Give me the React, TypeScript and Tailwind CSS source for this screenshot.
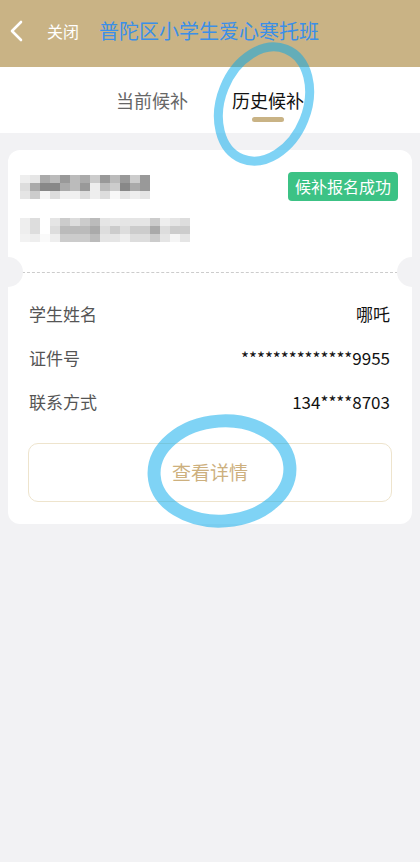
import React from 'react';

const FONT = { fontFamily: '"Noto Sans CJK SC", "Noto Sans", sans-serif' };

// 打码区块的灰度数据
const blurA = [
  ['#eeeeee', '#e6e6e6', '#aaaaaa', '#bbbbbb', '#999999', '#bbbbbb', '#aaaaaa', '#cccccc', '#999999', '#bbbbbb', '#999999', '#cccccc', '#999999'],
  ['#dddddd', '#aaaaaa', '#888888', '#888888', '#aaaaaa', '#bbbbbb', '#999999', '#eeeeee', '#bbbbbb', '#cccccc', '#888888', '#aaaaaa', '#999999'],
  ['#e5e5e5', '#cccccc', '#f5f5f5', '#dddddd', '#f0f0f0', '#f0f0f0', '#dddddd', '#eeeeee', '#dddddd', '#f8f8f8', '#e5e5e5', '#eeeeee', '#e5e5e5'],
];

const blurB = [
  ['#eeeeee', '#dddddd', '#ffffff', '#e5e5e5', '#cccccc', '#dddddd', '#cccccc', '#bbbbbb', '#e5e5e5', '#e8e8e8', '#e5e5e5', '#e5e5e5', '#e5e5e5', '#cccccc', '#eeeeee', '#e5e5e5', '#dddddd'],
  ['#eeeeee', '#dddddd', '#ffffff', '#dddddd', '#bbbbbb', '#bbbbbb', '#bbbbbb', '#aaaaaa', '#dddddd', '#cccccc', '#dddddd', '#cccccc', '#cccccc', '#aaaaaa', '#dddddd', '#cccccc', '#cccccc'],
  ['#f2f2f2', '#eeeeee', '#fafafa', '#eeeeee', '#cccccc', '#cccccc', '#cccccc', '#bbbbbb', '#e5e5e5', '#e5e5e5', '#eeeeee', '#dddddd', '#dddddd', '#cccccc', '#e5e5e5', '#f5f5f5', '#e5e5e5'],
];

function Mosaic({ rows }: { rows: string[][] }) {
  return (
    <div className="flex flex-col">
      {rows.map((row, i) => (
        <div key={i} className="flex">
          {row.map((c, j) => (
            <div key={j} className="w-[10px] h-[8px]" style={{ backgroundColor: c }} />
          ))}
        </div>
      ))}
    </div>
  );
}

const infoRows = [
  { label: '学生姓名', value: '哪吒' },
  { label: '证件号', value: '**************9955' },
  { label: '联系方式', value: '134****8703' },
];

export default function App() {
  return (
    <div className="relative w-[420px] h-[862px] bg-[#f2f2f4] overflow-hidden" style={FONT}>
      {/* 顶部栏 */}
      <div className="h-[67px] bg-[#c9b385] flex items-start pt-[19px]">
        <svg width="14" height="24" viewBox="0 0 14 24" className="ml-[9px]">
          <polyline points="12,3 3,12 12,21" fill="none" stroke="#ffffff" strokeWidth="2.6" strokeLinecap="round" strokeLinejoin="round" />
        </svg>
        <span className="ml-[24px] text-[16px] leading-[24px] text-white">关闭</span>
        <span className="ml-[20px] text-[20px] leading-[24px] text-[#3b8fe8]">普陀区小学生爱心寒托班</span>
      </div>

      {/* 标签页 */}
      <div className="h-[66px] bg-white flex justify-center gap-[44px] pt-[20px]">
        <div className="flex flex-col items-center">
          <span className="text-[18px] leading-[26px] text-[#666666]">当前候补</span>
          <div className="mt-[4px] w-[32px] h-[5px] rounded-full bg-transparent" />
        </div>
        <div className="flex flex-col items-center">
          <span className="text-[18px] leading-[26px] text-[#111111]">历史候补</span>
          <div className="mt-[4px] w-[32px] h-[5px] rounded-full bg-[#c9b385]" />
        </div>
      </div>

      {/* 卡片 */}
      <div className="mx-[8px] mt-[17px] bg-white rounded-[12px]">
        <div className="flex justify-between items-start pt-[22px] pl-[12px] pr-[14px]">
          <div className="flex flex-col gap-[19px] mt-[3px]">
            <Mosaic rows={blurA} />
            <Mosaic rows={blurB} />
          </div>
          <div className="h-[29px] px-[7px] rounded-[4px] bg-[#3cc285] text-white text-[16px] leading-[29px]">
            候补报名成功
          </div>
        </div>

        <div className="relative mt-[30px] h-0">
          <div className="mx-[14px] border-t border-dashed border-[#cccccc]" />
          <div className="absolute -left-[15px] -top-[15px] w-[30px] h-[30px] rounded-full bg-[#f2f2f4]" />
          <div className="absolute -right-[15px] -top-[15px] w-[30px] h-[30px] rounded-full bg-[#f2f2f4]" />
        </div>

        <div className="pt-[20px] px-[20px] pb-[22px]">
          {infoRows.map((r) => (
            <div key={r.label} className="h-[44px] flex items-center justify-between text-[17px] pl-[1px] pr-[2px]">
              <span className="text-[#555555]">{r.label}</span>
              <span className="text-[#111111]">{r.value}</span>
            </div>
          ))}
          <div className="mt-[19px] h-[59px] rounded-[10px] border border-[#eee4cd] flex items-center justify-center text-[19px] text-[#cdb07e]">
            查看详情
          </div>
        </div>
      </div>

      {/* 标注圈 */}
      <svg className="absolute inset-0 pointer-events-none" width="420" height="862">
        <ellipse cx="264" cy="104" rx="43" ry="59" transform="rotate(22 264 104)" fill="none" stroke="rgb(0,167,235)" strokeOpacity="0.5" strokeWidth="9" />
        <ellipse cx="222" cy="471" rx="68" ry="50" transform="rotate(-4 222 471)" fill="none" stroke="rgb(0,167,235)" strokeOpacity="0.5" strokeWidth="13" />
      </svg>
    </div>
  );
}
